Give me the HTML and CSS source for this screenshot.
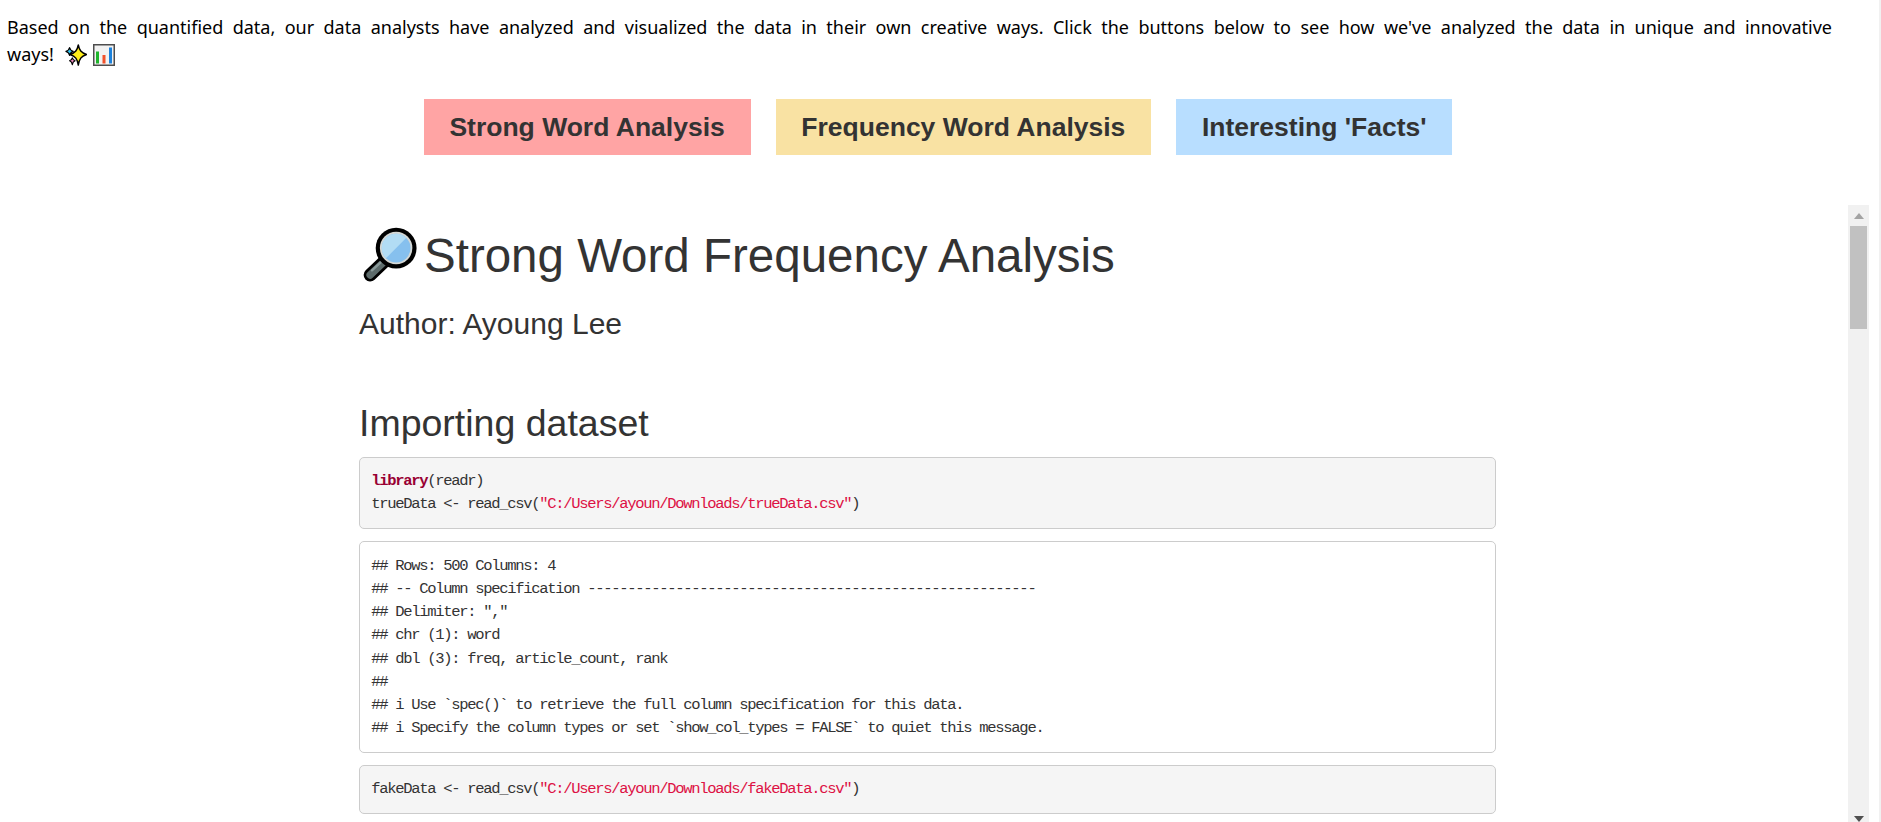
FILE: index.html
```
<!DOCTYPE html>
<html lang="en">
<head>
<meta charset="utf-8">
<title>Strong Word Frequency Analysis</title>
<link rel="stylesheet" href="styles.css">
</head>
<body>
<div class="page">
  <p class="intro">Based on the quantified data, our data analysts have analyzed and visualized the data in their own creative ways. Click the buttons below to see how we've analyzed the data in unique and innovative ways! <svg class="emoji sparkles" viewBox="0 0 24 24"><path d="M14.5 1 C15.7 7 17.5 9.3 23.5 11.5 C17.5 13.7 15.7 16 14.5 23 C13.3 16 11.5 13.7 5.5 11.5 C11.5 9.3 13.3 7 14.5 1Z" fill="#ffee1a" stroke="#000" stroke-width="1.6" stroke-linejoin="round"/><path d="M5 4 C5.5 6.5 6.2 7.2 9 8 C6.2 8.8 5.5 9.5 5 12.5 C4.5 9.5 3.8 8.8 1 8 C3.8 7.2 4.5 6.5 5 4Z" fill="#2fc4f2" stroke="#000" stroke-width="1.3" stroke-linejoin="round"/><path d="M8 15 C8.4 17 9 17.6 11 18.3 C9 19 8.4 19.6 8 22.5 C7.6 19.6 7 19 5 18.3 C7 17.6 7.6 17 8 15Z" fill="#f08ac0" stroke="#000" stroke-width="1.3" stroke-linejoin="round"/></svg><svg class="emoji chart" viewBox="0 0 22 22"><rect x="0.75" y="0.75" width="20.5" height="20.5" fill="#f2f2f2" stroke="#4d4d4d" stroke-width="1.5"/><rect x="3" y="7.5" width="3" height="12" fill="#1fb52c"/><rect x="9.5" y="11" width="3" height="8.5" fill="#f2512a"/><rect x="16" y="3.5" width="3" height="16" fill="#1c82dc"/></svg></p>
  <nav class="tabs">
    <a class="tab tab-strong">Strong Word Analysis</a>
    <a class="tab tab-freq">Frequency Word Analysis</a>
    <a class="tab tab-facts">Interesting 'Facts'</a>
  </nav>
  <section class="frame">
    <article class="doc">
      <h1 class="title"><svg class="mag" viewBox="-2 -2 70 70"><path d="M10 54 L30 35" stroke="#000" stroke-width="14" stroke-linecap="round"/><path d="M10 54 L30 35" stroke="#5d6b6b" stroke-width="8" stroke-linecap="round"/><path d="M12 49 L26 36" stroke="#8a9a9a" stroke-width="2.5" stroke-linecap="round"/><circle cx="38" cy="25" r="22" fill="#000"/><circle cx="38" cy="25" r="17.5" fill="#d5d8d5"/><circle cx="38" cy="25" r="15.5" fill="#86c0ee"/><path d="M27 36 A15.5 15.5 0 0 1 49 14Z" fill="#b2dcf4"/></svg>Strong Word Frequency Analysis</h1>
      <h4 class="author">Author: Ayoung Lee</h4>
      <h2 class="section-title">Importing dataset</h2>
      <pre class="code"><span class="line"><span class="kw">library</span>(readr)</span><span class="line">trueData &lt;- read_csv(<span class="str">"C:/Users/ayoun/Downloads/trueData.csv"</span>)</span></pre>
      <pre class="output">## Rows: 500 Columns: 4
## -- Column specification --------------------------------------------------------
## Delimiter: ","
## chr (1): word
## dbl (3): freq, article_count, rank
##
## i Use `spec()` to retrieve the full column specification for this data.
## i Specify the column types or set `show_col_types = FALSE` to quiet this message.</pre>
      <pre class="code">fakeData &lt;- read_csv(<span class="str">"C:/Users/ayoun/Downloads/fakeData.csv"</span>)</pre>
    </article>
    <div class="scrollbar">
      <div class="sb-btn"><svg class="arrow" viewBox="0 0 10 6"><path d="M5 0 L10 6 H0Z" fill="#a3a3a3"/></svg></div>
      <div class="sb-thumb"></div>
      <div class="sb-btn sb-end"><svg class="arrow" viewBox="0 0 10 6"><path d="M0 0 H10 L5 6Z" fill="#505050"/></svg></div>
    </div>
  </section>
</div>
</body>
</html>
```
FILE: styles.css
```
html, body {
  margin: 0;
  height: 100%;
  overflow: hidden;
  background: #fff;
}
.page {
  box-sizing: border-box;
  height: 822px;
  overflow: hidden;
  border-right: 2px solid #f1f1f1;
  color: #333;
}
.intro {
  margin: 0;
  padding: 14px 47px 0 7px;
  font: 18px/27px "Noto Sans", "Noto Sans CJK KR", sans-serif;
  word-spacing: 3.5px;
  color: #000;
  text-align: justify;
}
.emoji {
  display: inline-block;
  vertical-align: -5px;
  height: 22px;
  width: 22px;
}
.sparkles { margin: 0 6px 0 3px; }
.tabs {
  display: flex;
  justify-content: center;
  gap: 25px;
  margin: 31px 3px 0 0;
}
.tab {
  height: 56px;
  padding: 0 25.8px;
  display: flex;
  align-items: center;
  font: bold 26.5px "Liberation Sans", Arial, sans-serif;
  color: #333;
}
.tab-strong { background: #ffa4a4; }
.tab-freq { background: #f9e2a3; }
.tab-facts { background: #b8deff; }
.frame {
  display: flex;
  height: 624px;
  margin: 50px 10px 0 0;
  overflow: hidden;
  font-family: "Liberation Sans", Arial, sans-serif;
}
.doc {
  flex: 1;
  min-width: 0;
  padding: 0 352px 0 359px;
}
.title {
  margin: 18px 0 0;
  font-size: 47.5px;
  font-weight: 400;
  height: 65px;
  display: flex;
  align-items: center;
}
.mag {
  flex: none;
  width: 65px;
  height: 65px;
}
.author {
  margin: 17.6px 0 0;
  font-size: 30px;
  font-weight: 400;
  line-height: 36px;
}
.section-title {
  margin: 60.4px 0 0;
  font-size: 37.5px;
  font-weight: 400;
  line-height: 42px;
}
.code, .output {
  box-sizing: border-box;
  margin: 12.5px 0 0;
  padding: 12.25px 11.25px 11.35px;
  border: 1.25px solid #ccc;
  border-radius: 5px;
  font: 15.5px/23.2px "Liberation Mono", monospace;
  letter-spacing: -1.3px;
  color: #333;
  white-space: pre;
  overflow: hidden;
}
.code { background: #f5f5f5; }
.output { background: #fff; }
.section-title + .code { margin-top: 13px; }
.line { display: block; }
.kw { color: #990033; font-weight: bold; }
.str { color: #dd1144; }
.scrollbar {
  flex: none;
  width: 21px;
  display: flex;
  flex-direction: column;
  background: #f1f1f1;
}
.sb-btn {
  flex: none;
  height: 21px;
  display: flex;
  align-items: center;
  justify-content: center;
}
.sb-end { margin-top: auto; }
.arrow { width: 10px; height: 6px; }
.sb-thumb {
  flex: none;
  height: 103px;
  margin: 0 2px;
  background: #c1c1c1;
}
```
